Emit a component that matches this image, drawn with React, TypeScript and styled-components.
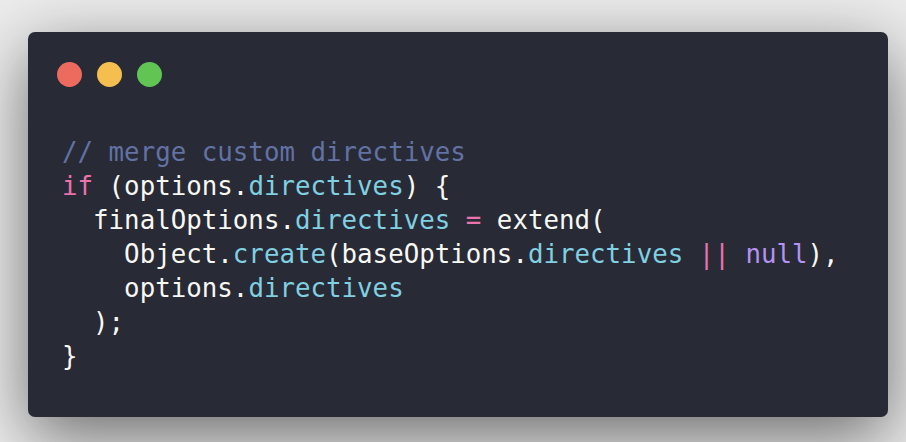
import React from "react";
import styled, { createGlobalStyle } from "styled-components";

const Global = createGlobalStyle`
  html, body { margin: 0; padding: 0; background: #ececec; }
  body { width: 906px; height: 442px; overflow: hidden; }
`;

const Page = styled.div`
  box-sizing: border-box;
  width: 906px;
  height: 442px;
  padding: 32px 18px 0 28px;
  background: #ececec;
`;

const Window = styled.div`
  box-sizing: border-box;
  height: 385px;
  background: #282a36;
  border-radius: 7px;
  padding: 30px 29px 0 29px;
  box-shadow: 0 20px 68px rgba(0, 0, 0, 0.55);
`;

const TitleBar = styled.div`
  display: flex;
  gap: 15px;
`;

const Dot = styled.span<{ $c: string }>`
  width: 25px;
  height: 25px;
  border-radius: 50%;
  background: ${(p) => p.$c};
`;

const Code = styled.pre`
  margin: 48px 0 0 5px;
  font-family: "DejaVu Sans Mono", "Liberation Mono", monospace;
  font-size: 25.8px;
  line-height: 34px;
  color: #f8f8f2;
  white-space: pre;
`;

type Kind = "comment" | "kw" | "prop" | "const";
const colors: Record<Kind, string> = {
  comment: "#6272a4",
  kw: "#ea72ad",
  prop: "#80d0e2",
  const: "#b592f2",
};

const Tok = styled.span<{ $k: Kind }>`
  color: ${(p) => colors[p.$k]};
`;

export default function App() {
  return (
    <>
      <Global />
      <Page>
        <Window>
          <TitleBar>
            <Dot $c="#ed6a5e" />
            <Dot $c="#f5bf4f" />
            <Dot $c="#61c554" />
          </TitleBar>
          <Code>
            <Tok $k="comment">// merge custom directives</Tok>
            {"\n"}
            <Tok $k="kw">if</Tok>
            {" (options."}
            <Tok $k="prop">directives</Tok>
            {") {\n  finalOptions."}
            <Tok $k="prop">directives</Tok>
            {" "}
            <Tok $k="kw">=</Tok>
            {" extend(\n    Object."}
            <Tok $k="prop">create</Tok>
            {"(baseOptions."}
            <Tok $k="prop">directives</Tok>
            {" "}
            <Tok $k="kw">||</Tok>
            {" "}
            <Tok $k="const">null</Tok>
            {"),\n    options."}
            <Tok $k="prop">directives</Tok>
            {"\n  );\n}"}
          </Code>
        </Window>
      </Page>
    </>
  );
}
